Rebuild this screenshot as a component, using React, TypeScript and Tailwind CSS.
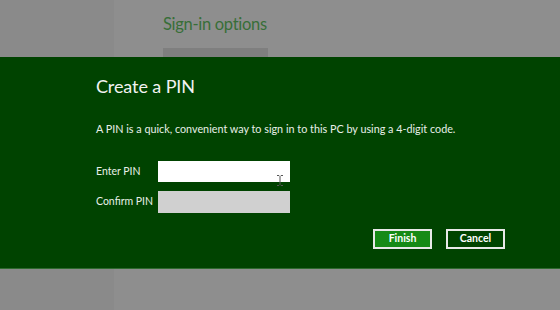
export default function App() {
  const font = { fontFamily: 'Lato, "Open Sans", "Noto Sans", sans-serif' };
  return (
    <div className="relative w-[560px] h-[310px] overflow-hidden" style={font}>
      <div className="flex h-full">
        <div className="w-[114px] h-full bg-[#8a8a8a]" />
        <div className="flex-1 h-full bg-[#8e8e8e] pl-[49px] pt-[13px]">
          <div className="text-[16.5px] leading-[22px] tracking-[-0.3px] text-[#386e38]">Sign-in options</div>
          <div className="mt-[13px] w-[105px] h-[12px] bg-[#7f7f7f]" />
        </div>
      </div>
      <div className="absolute left-0 right-0 top-[57px] h-[212px] bg-[#004300] border-b border-[#2f6a2f] pl-[96px] pt-[16px] text-white">
        <div className="text-[18px] leading-[26px] tracking-[-0.1px] text-[#f2f2f2]">Create a PIN</div>
        <div className="mt-[23px] text-[10.8px] leading-[14px] text-[#e8efe8]">
          A PIN is a quick, convenient way to sign in to this PC by using a 4-digit code.
        </div>
        <div className="mt-[25px] flex flex-col gap-[9px]">
          <div className="flex items-center">
            <div className="w-[62px] text-[10.5px] text-[#e8efe8]">Enter PIN</div>
            <div className="relative w-[132px] h-[21px] bg-white">
              <svg className="absolute left-[119px] top-[14px]" width="6" height="11" viewBox="0 0 6 11">
                <path d="M0 0.5h2.2M3.8 0.5H6M3 1v9M0 10.5h2.2M3.8 10.5H6" stroke="#555" strokeWidth="1" fill="none" />
              </svg>
            </div>
          </div>
          <div className="flex items-center">
            <div className="w-[62px] text-[10.5px] text-[#e8efe8]">Confirm PIN</div>
            <div className="w-[132px] h-[22px] bg-[#d0d0d0]" />
          </div>
        </div>
        <div className="mt-[16px] flex justify-end gap-[14px] pr-[55px]">
          <div className="w-[59px] h-[20px] bg-[#168a16] border-2 border-[#e8e8e8] flex items-center justify-center text-[10.5px] font-bold text-white">
            Finish
          </div>
          <div className="w-[59px] h-[20px] bg-[#004300] border-2 border-[#e8e8e8] flex items-center justify-center text-[10.5px] font-bold text-white">
            Cancel
          </div>
        </div>
      </div>
    </div>
  );
}
